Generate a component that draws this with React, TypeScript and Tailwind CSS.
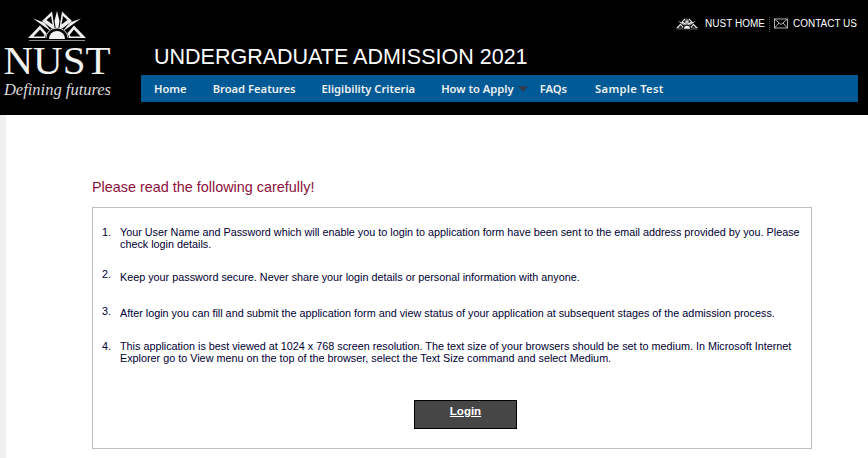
const steps = [
  "Your User Name and Password which will enable you to login to application form have been sent to the email address provided by you. Please check login details.",
  "Keep your password secure. Never share your login details or personal information with anyone.",
  "After login you can fill and submit the application form and view status of your application at subsequent stages of the admission process.",
  "This application is best viewed at 1024 x 768 screen resolution. The text size of your browsers should be set to medium. In Microsoft Internet Explorer go to View menu on the top of the browser, select the Text Size command and select Medium.",
];

const navItems = ["Home", "Broad Features", "Eligibility Criteria", "How to Apply", "FAQs", "Sample Test"];

function Half() {
  return (
    <>
      <path d="M14 10 L24 0.5 L27 20 Z" fill="#eee" />
      <path d="M18.5 9 L23 5 L24.5 13.5 Z" fill="#000" />
      <path d="M5 7.5 L16 11.5 L24 21 Z" fill="#f0f0f0" />
      <path d="M0 27 L12 14.5 L20 24 L17 27 Z" fill="#eee" />
      <path d="M5.5 25.5 L12 18.5 L16.5 24 L15.5 25.5 Z" fill="#000" />
    </>
  );
}

function Sunburst({ className }: { className: string }) {
  return (
    <svg viewBox="0 0 58 31" className={className} fill="none">
      <path d="M29 0 L31.5 10 L30 19 H28 L26.5 10 Z" fill="#f4f4f4" />
      <Half />
      <g transform="matrix(-1 0 0 1 58 0)">
        <Half />
      </g>
      <path d="M17 28 A12 11 0 0 1 41 28 Z" fill="#000" />
      <path d="M18 27 A11 10 0 0 1 40 27" stroke="#ccc" strokeWidth="1" />
      <path d="M21 28 A8 8 0 0 1 37 28 Z" fill="#f2f2f2" />
      <path d="M1 29.5 H57" stroke="#8f8f8f" strokeWidth="1" />
    </svg>
  );
}

export default function App() {
  return (
    <div className="min-h-[458px] bg-white font-['Liberation_Sans',sans-serif]">
      <header className="flex h-[115px] bg-black">
        <div className="w-[141px] shrink-0 pt-[11px] text-[#f2f2f2]">
          <div className="flex w-[114px] flex-col items-center">
            <Sunburst className="h-[31px] w-[58px]" />
            <div className="mt-[1px] font-['Liberation_Serif',serif] text-[41px] leading-[35px]">NUST</div>
            <div className="mt-[2px] pl-[1px] font-['Liberation_Serif',serif] text-[16.5px] italic leading-[20px] text-[#d8d8d8]">Defining futures</div>
          </div>
        </div>
        <div className="flex w-[717px] flex-col">
          <div className="flex h-[45px] items-start justify-end pr-[1px] pt-[17px] text-[10px] leading-[13px] text-white">
            <Sunburst className="mr-[7px] mt-[1px] h-[12px] w-[22px]" />
            <span>NUST HOME</span>
            <span className="mx-[4px] h-[15px] border-l border-dotted border-[#555]" />
            <svg viewBox="0 0 14 10" className="mr-[5px] mt-[1px] h-[11px] w-[14px]" fill="none" stroke="#ddd" strokeWidth="0.8">
              <rect x="0.5" y="0.5" width="13" height="9" />
              <path d="M0.5 0.5 L7 6 L13.5 0.5 M0.5 9.5 L5 4.5 M13.5 9.5 L9 4.5" />
            </svg>
            <span>CONTACT US</span>
          </div>
          <h1 className="h-[30px] pl-[13px] text-[21.5px] leading-[24px] text-white">UNDERGRADUATE ADMISSION 2021</h1>
          <nav className="flex h-[27px] items-center gap-[26px] bg-[#005a96] pl-[13px] pt-[1px] font-['Noto_Sans',sans-serif] text-[11.2px] font-semibold text-[#f0f0f0]">
            {navItems.map((item) => (
              <div key={item} className={item === "Sample Test" ? "relative ml-[2px] tracking-[0.3px]" : "relative"}>
                <span>{item}</span>
                {item === "How to Apply" && (
                  <span className="absolute left-full top-[5px] ml-[4px] h-0 w-0 border-x-[5px] border-t-[6px] border-x-transparent border-t-[#2f3b52]" />
                )}
              </div>
            ))}
          </nav>
        </div>
      </header>

      <div className="flex">
        <div className="h-[343px] w-[6px] bg-[#f0f0f0]" />
        <main className="pl-[86px] pt-[64px]">
          <h2 className="text-[14.4px] leading-[16px] text-[#8c0f3c]">Please read the following carefully!</h2>
          <div className="mt-[12px] h-[242px] w-[720px] border border-[#c0c0c0] pl-[9px] pr-[10px] pt-[18px]">
            <ol className="flex flex-col text-[10.8px] leading-[12px] text-[#000033]">
              {steps.map((step, i) => (
                <li key={i} className={`flex ${i === 0 ? "mb-[21px]" : i === 1 ? "mb-[24px]" : i === 2 ? "mb-[21px]" : ""}`}>
                  <span className={`w-[18px] shrink-0 ${i === 1 ? "mt-[-3px]" : i === 2 ? "mt-[-2px]" : ""}`}>{i + 1}.</span>
                  <span>{step}</span>
                </li>
              ))}
            </ol>
            <div className="ml-[312px] mt-[36px] flex">
              <button className="flex h-[29px] w-[103px] items-start justify-center border border-black bg-[#464646] pt-[3px] text-[11.5px] font-bold leading-[14px] text-white underline">
                Login
              </button>
            </div>
          </div>
        </main>
      </div>
    </div>
  );
}
